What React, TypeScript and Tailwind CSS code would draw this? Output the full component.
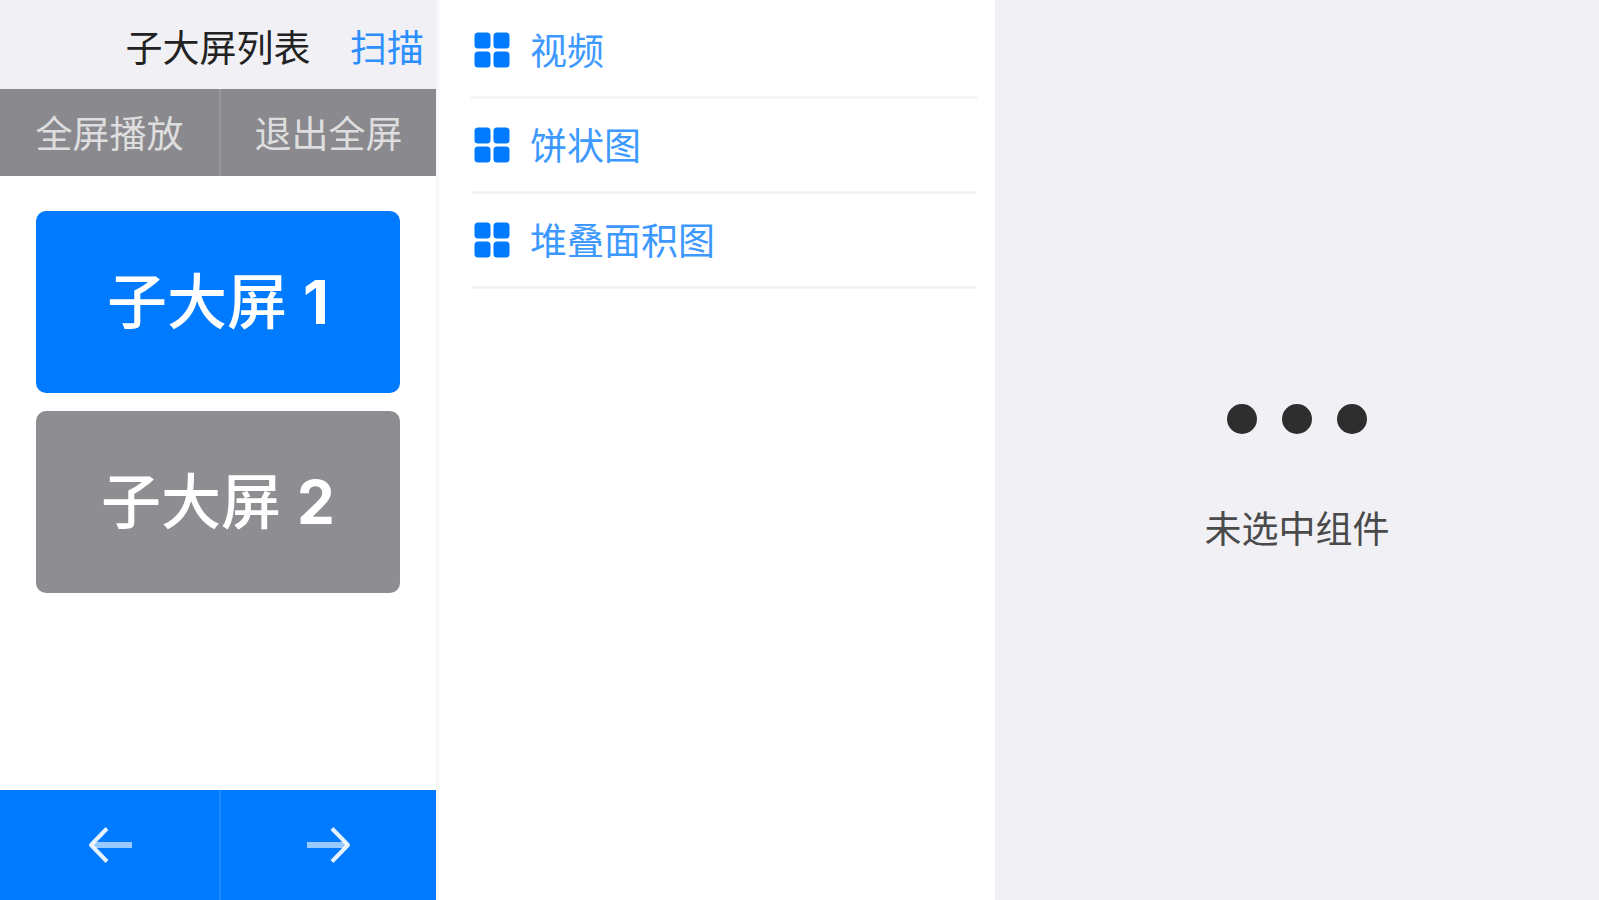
import { useState } from 'react';

const screens = [1, 2];
const components = ['视频', '饼状图', '堆叠面积图'];

const GridIcon = () => (
  <svg width="36" height="36" viewBox="0 0 36 36" fill="currentColor" aria-hidden="true">
    <rect x="0.5" y="0.5" width="16" height="16" rx="3.5" />
    <rect x="19.5" y="0.5" width="16" height="16" rx="3.5" />
    <rect x="0.5" y="19.5" width="16" height="16" rx="3.5" />
    <rect x="19.5" y="19.5" width="16" height="16" rx="3.5" />
  </svg>
);

const ArrowLeft = () => (
  <svg width="44" height="38" viewBox="0 0 44 38" fill="none" stroke="white" aria-hidden="true">
    <path d="M5 19H44" strokeWidth="6" strokeOpacity="0.6" />
    <path d="M19 2.5L3 19L19 35.5" strokeWidth="4" strokeOpacity="0.9" strokeLinejoin="round" />
  </svg>
);

const ArrowRight = () => (
  <svg width="44" height="38" viewBox="0 0 44 38" fill="none" stroke="white" aria-hidden="true">
    <path d="M0 19H39" strokeWidth="6" strokeOpacity="0.6" />
    <path d="M25 2.5L41 19L25 35.5" strokeWidth="4" strokeOpacity="0.9" strokeLinejoin="round" />
  </svg>
);

export default function App() {
  const [current, setCurrent] = useState(0);

  const move = (step: number) => {
    setCurrent((current + step + screens.length) % screens.length);
  };

  return (
    <div className="grid min-h-screen grid-cols-[439fr_556fr_604fr] bg-white font-['Inter','Noto_Sans_CJK_SC',sans-serif] text-[37px] leading-[48px]">
      <aside className="flex flex-col border-r-3 border-[#f7f7f8]">
        <header className="grid h-[89px] grid-cols-[1fr_auto_1fr] items-center bg-[#f0f0f5] pt-2">
          <h1 className="col-start-2 text-[#222222]">子大屏列表</h1>
          <button className="justify-self-end pr-3 text-[#2b8fff]">扫描</button>
        </header>

        <div className="grid h-[87px] grid-cols-[221fr_215fr] bg-[#8a898e] text-[#dededf]">
          <button className="border-r-2 border-[#98979c] pt-1">全屏播放</button>
          <button className="pt-1">退出全屏</button>
        </div>

        <div className="flex flex-1 flex-col gap-[18px] px-9 pt-[35px]">
          {screens.map((num, i) => (
            <button
              key={num}
              onClick={() => setCurrent(i)}
              className={`h-[182px] rounded-[10px] text-[60px] font-medium text-white ${
                i === current ? 'bg-[#007aff]' : 'bg-[#8e8d92]'
              }`}
            >
              子大屏 <span className="font-bold">{num}</span>
            </button>
          ))}
        </div>

        <footer className="grid h-[110px] grid-cols-[221fr_215fr] bg-[#007aff]">
          <button
            aria-label="上一个"
            onClick={() => move(-1)}
            className="flex items-center justify-center border-r-2 border-[#1f8aff]"
          >
            <ArrowLeft />
          </button>
          <button
            aria-label="下一个"
            onClick={() => move(1)}
            className="flex items-center justify-center"
          >
            <ArrowRight />
          </button>
        </footer>
      </aside>

      <main className="pt-1 pr-[18px] pl-8">
        <ul>
          {components.map((name) => (
            <li key={name} className="border-b-3 border-[#f4f4f5]">
              <button className="flex h-[92px] w-full items-center gap-5 pl-[3px] text-left text-[#007aff]">
                <GridIcon />
                <span className="pt-1 text-[#3d99ff]">{name}</span>
              </button>
            </li>
          ))}
        </ul>
      </main>

      <section className="flex flex-col items-center justify-center gap-[72px] bg-[#f0f0f5] pt-[58px]">
        <svg width="140" height="30" viewBox="0 0 140 30" fill="#2e2e2e" aria-hidden="true">
          <circle cx="15" cy="15" r="15" />
          <circle cx="70" cy="15" r="15" />
          <circle cx="125" cy="15" r="15" />
        </svg>
        <p className="text-[#4a4a4a]">未选中组件</p>
      </section>
    </div>
  );
}
